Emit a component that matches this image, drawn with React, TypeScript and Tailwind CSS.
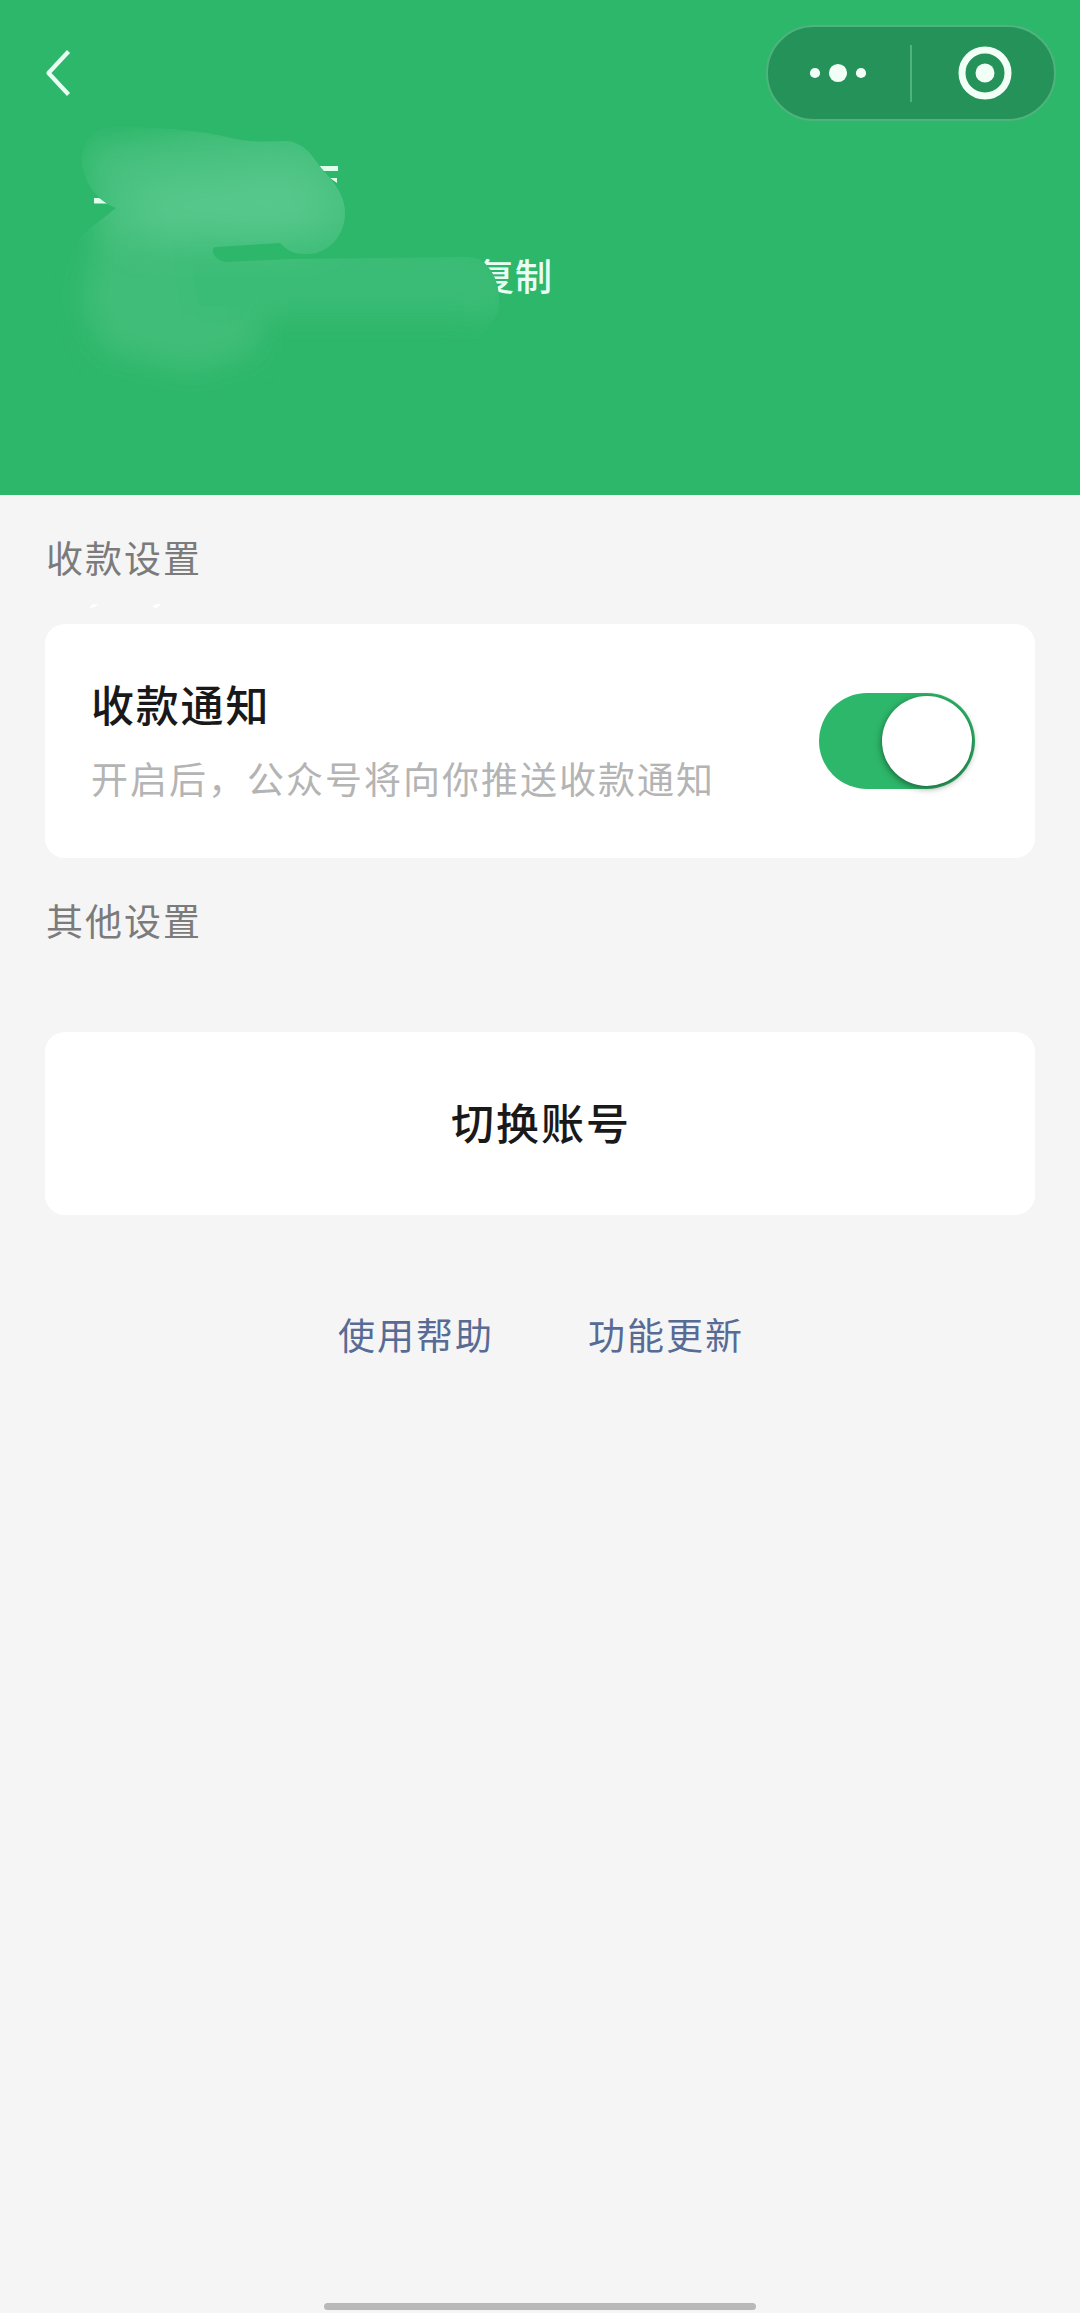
import { useState } from 'react';
import { clsx } from 'clsx';

function BackIcon() {
  return (
    <svg width="26" height="48" viewBox="0 0 26 48" fill="none" stroke="#e9fff3" strokeWidth="4.2" strokeLinejoin="round">
      <path d="M23.5 2.5 3.5 24l20 21.5" />
    </svg>
  );
}

function MoreIcon() {
  return (
    <svg width="58" height="20" viewBox="0 0 58 20" fill="#f1fff7">
      <circle cx="6" cy="10" r="5.1" />
      <circle cx="29" cy="10" r="9.1" />
      <circle cx="52" cy="10" r="5.1" />
    </svg>
  );
}

function CloseIcon() {
  return (
    <svg width="54" height="54" viewBox="0 0 54 54" fill="none">
      <circle cx="27" cy="27" r="23" stroke="#f1fff7" strokeWidth="7" />
      <circle cx="27" cy="27" r="9.5" fill="#f1fff7" />
    </svg>
  );
}

// Brush strokes that hide the merchant name and account number
function Redaction() {
  return (
    <svg className="pointer-events-none absolute left-0 top-0" width="600" height="420" viewBox="0 0 600 420">
      <defs>
        <clipPath id="smear">
          <path d="M108 127C150 126 200 131 222 136C245 142 262 142 285 141C304 142 311 154 321 168C336 184 345 196 345 213C345 236 328 254 307 254C293 254 288 251 280 243L215 247C209 250 216 262 227 262L290 259L460 257C478 257 482 259 488 267C495 275 500 289 499 305C499 320 486 326 482 340L380 350L290 350L270 390L150 396L60 370L50 270C70 240 92 228 116 208C96 200 80 180 82 155C84 140 92 130 108 127Z" />
        </clipPath>
        <filter id="soft" x="-30%" y="-40%" width="160%" height="180%">
          <feGaussianBlur stdDeviation="14" />
        </filter>
        <filter id="softer" x="-30%" y="-60%" width="160%" height="220%">
          <feGaussianBlur stdDeviation="24" />
        </filter>
      </defs>
      <g fill="#ddffec">
        <path d="M94 198 99 198 111 203.500H94Z" />
        <path d="M320 166H338V171H322Z" />
        <path d="M330 178H337V183Z" />
      </g>
      <g clipPath="url(#smear)">
        <rect width="600" height="420" fill="#2db76a" />
        <g filter="url(#soft)">
          <path d="M84 146 200 128 300 124 385 170V262L300 268H100L90 190Z" fill="#45bf7c" />
          <path d="M96 244 220 230 262 290 258 352 190 372 104 350 82 300Z" fill="#3fbd78" />
          <path d="M180 240H480L510 262V318L460 316H190Z" fill="#3bbc76" />
        </g>
        <path d="M120 185 300 165 345 200 310 235H140Z" fill="#59c98d" filter="url(#softer)" />
      </g>
    </svg>
  );
}

function Switch({ checked, onChange }: { checked: boolean; onChange: (v: boolean) => void }) {
  return (
    <button
      role="switch"
      aria-checked={checked}
      onClick={() => onChange(!checked)}
      className={clsx(
        'flex h-24 w-[156px] items-center rounded-full p-[3px] transition-colors',
        checked ? 'justify-end bg-[#2db76a]' : 'justify-start bg-[#dfdfdf]'
      )}
    >
      <span className="size-[90px] rounded-full bg-white shadow-[0_2px_7px_rgba(0,0,0,0.5)]" />
    </button>
  );
}

export default function App() {
  const [notify, setNotify] = useState(true);

  return (
    <div className="flex h-[2313px] w-[1080px] flex-col bg-[#f5f5f5] font-['Noto_Sans_CJK_SC',sans-serif]">
      {/* Header */}
      <header className="relative h-[495px] shrink-0 bg-[#2db76a] pt-[25px]">
        <div className="flex h-24 items-center justify-between pl-[45px] pr-6">
          <button aria-label="返回">
            <BackIcon />
          </button>
          <div className="flex h-24 w-[290px] items-center rounded-full border-2 border-[#4fb37c] bg-[#25925a]">
            <button className="flex h-full w-[142px] items-center justify-center pr-0.5" aria-label="更多">
              <MoreIcon />
            </button>
            <span className="h-[57px] w-0.5 bg-[#4fb37c]" />
            <button className="flex h-full flex-1 items-center justify-center pl-1" aria-label="关闭">
              <CloseIcon />
            </button>
          </div>
        </div>
        <button className="ml-[477px] mt-[124px] block text-[37px] font-medium leading-[60px] tracking-[1px] text-[#e9fff3]">
          复制
        </button>
        <Redaction />
      </header>

      {/* Settings */}
      <main className="flex flex-col px-[45px]">
        <h2 className="mt-8 pl-px text-[37px] leading-[60px] tracking-[2px] text-[#7b7b7b]">收款设置</h2>
        <svg className="ml-[44px] mt-4" width="76" height="6" viewBox="0 0 76 6" fill="#fff">
          <path d="M0 5 4 1h5L6 4ZM63 4l4-3h5l-4 4Z" />
        </svg>
        <section className="mt-[15px] flex h-[234px] items-center justify-between rounded-[20px] bg-white pl-[46px] pr-[60px]">
          <div className="-mt-1.5">
            <div className="text-[43px] font-medium leading-[70px] tracking-[1.800px] text-[#191919]">收款通知</div>
            <div className="mt-2.5 text-[37px] leading-[60px] tracking-[2px] text-[#b4b4b4]">
              开启后，公众号将向你推送收款通知
            </div>
          </div>
          <Switch checked={notify} onChange={setNotify} />
        </section>

        <h2 className="mt-8 pl-px text-[37px] leading-[60px] tracking-[2px] text-[#7b7b7b]">其他设置</h2>
        <button className="mt-[82px] h-[183px] rounded-[20px] bg-white pb-[5px] pl-0.5 text-[43px] font-medium tracking-[2px] text-[#191919]">
          切换账号
        </button>

        <nav className="mt-[89px] flex justify-center gap-[94px] pl-0.5 text-[37px] leading-[60px] tracking-[2px] text-[#576b95]">
          <a href="#">使用帮助</a>
          <a href="#">功能更新</a>
        </nav>
      </main>

      {/* Home indicator */}
      <div className="mx-auto mb-[3px] mt-auto h-[7px] w-[432px] rounded-full bg-[#b9b9b9]" />
    </div>
  );
}
